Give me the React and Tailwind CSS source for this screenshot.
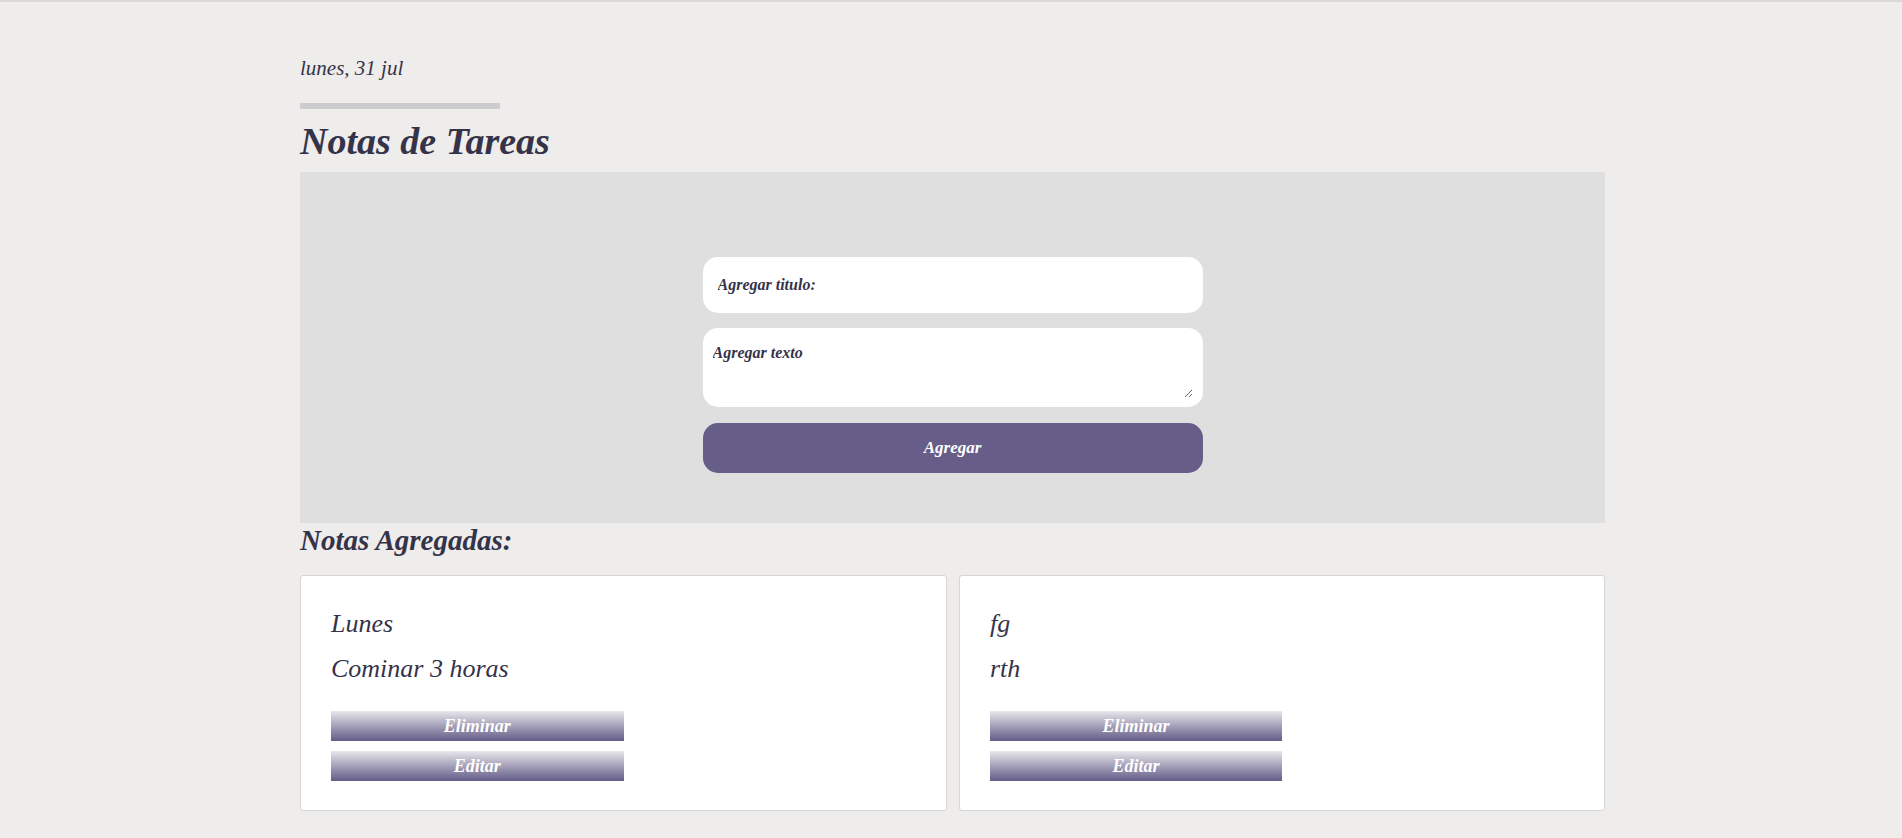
import React from "react";

const notes = [
  { title: "Lunes", text: "Cominar 3 horas" },
  { title: "fg", text: "rth" },
];

function NoteCard({ title, text }) {
  return (
    <div className="bg-white border border-[#d6d6d6] rounded-[3px] pt-[30px] px-[30px] pb-[29px]">
      <p className="text-[26px] leading-[36px] italic text-[#35334a]">{title}</p>
      <p className="mt-[9px] text-[26px] leading-[36px] italic text-[#35334a]">{text}</p>
      <div className="mt-[24px] w-1/2 flex flex-col gap-[10px]">
        <button className="h-[30px] w-full bg-linear-to-b from-[#e9e7eb] to-[#655d87] text-white font-bold italic text-[18px] leading-[30px]">
          Eliminar
        </button>
        <button className="h-[30px] w-full bg-linear-to-b from-[#e9e7eb] to-[#655d87] text-white font-bold italic text-[18px] leading-[30px]">
          Editar
        </button>
      </div>
    </div>
  );
}

export default function App() {
  return (
    <div className="min-h-screen bg-[#eeedeb] border-t-2 border-[#d9d9d9] font-['Liberation_Serif',serif] text-[#35334a] pb-[25px]">
      <div className="ml-[300px] w-[1305px] pt-[52px]">
        <p className="text-[21px] leading-[28px] italic">lunes, 31 jul</p>
        <div className="mt-[21px] h-[6px] w-[200px] bg-[#cccbcd]" />
        <h1 className="mt-[9px] text-[38px] leading-[46px] font-bold italic">Notas de Tareas</h1>
        <div className="mt-[8px] bg-[#dfdfdf] pt-[85px] pb-[50px] flex justify-center">
          <form className="w-[500px] flex flex-col" onSubmit={(e) => e.preventDefault()}>
            <input
              type="text"
              placeholder="Agregar titulo:"
              className="h-[56px] w-full bg-white rounded-[15px] px-[15px] text-[16px] font-bold italic outline-none placeholder:text-[#35334a]"
            />
            <div className="mt-[15px] h-[79px] w-full bg-white rounded-[15px] pt-[10px] pl-[10px] pr-[10px] pb-[9px]">
              <textarea
                placeholder="Agregar texto"
                className="h-full w-full bg-transparent pt-[3px] text-[16px] leading-[24px] font-bold italic outline-none placeholder:text-[#35334a] block"
              />
            </div>
            <button className="mt-[16px] h-[50px] w-full bg-[#665e88] rounded-[15px] text-white font-bold italic text-[17px]">
              Agregar
            </button>
          </form>
        </div>
        <h2 className="text-[29px] leading-[34px] font-bold italic">Notas Agregadas:</h2>
        <div className="mt-[18px] grid grid-cols-[647px_1fr] gap-[12px]">
          {notes.map((n, i) => (
            <NoteCard key={i} {...n} />
          ))}
        </div>
      </div>
    </div>
  );
}
